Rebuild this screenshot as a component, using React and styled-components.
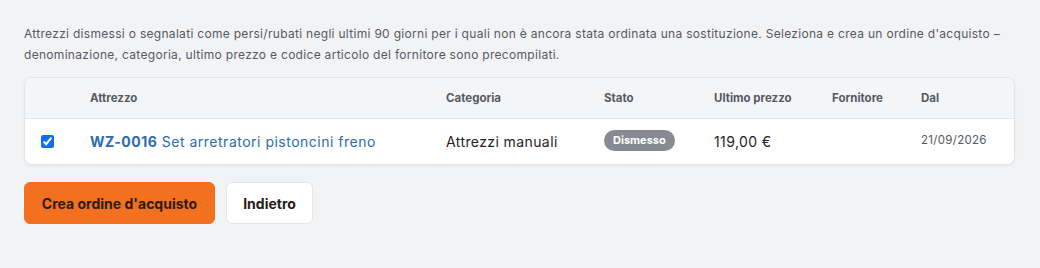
import React from "react";
import styled, { createGlobalStyle } from "styled-components";

const GlobalStyle = createGlobalStyle`
  body {
    margin: 0;
    background: #f2f3f5;
    font-family: Inter, "Noto Sans", sans-serif;
    color: #212529;
  }
`;

const rows = [
  {
    code: "WZ-0016",
    name: "Set arretratori pistoncini freno",
    category: "Attrezzi manuali",
    status: "Dismesso",
    price: "119,00 €",
    supplier: "",
    since: "21/09/2026",
  },
];

function App() {
  return (
    <>
      <GlobalStyle />
      <Page>
        <Intro>
          Attrezzi dismessi o segnalati come persi/rubati negli ultimi 90 giorni per i quali non è ancora stata
          ordinata una sostituzione. Seleziona e crea un ordine d'acquisto – denominazione, categoria, ultimo
          prezzo e codice articolo del fornitore sono precompilati.
        </Intro>
        <Card>
          <Table>
            <colgroup>
              <col style={{ width: 65 }} />
              <col style={{ width: 356 }} />
              <col style={{ width: 158 }} />
              <col style={{ width: 110 }} />
              <col style={{ width: 118 }} />
              <col style={{ width: 89 }} />
              <col />
            </colgroup>
            <thead>
              <tr>
                <Th />
                <Th>Attrezzo</Th>
                <Th>Categoria</Th>
                <Th>Stato</Th>
                <Th>Ultimo prezzo</Th>
                <Th>Fornitore</Th>
                <Th>Dal</Th>
              </tr>
            </thead>
            <tbody>
              {rows.map((r) => (
                <tr key={r.code}>
                  <Td>
                    <Check type="checkbox" defaultChecked />
                  </Td>
                  <Td>
                    <ToolLink href="#">
                      <Code>{r.code}</Code> {r.name}
                    </ToolLink>
                  </Td>
                  <Td>{r.category}</Td>
                  <Td>
                    <Badge>{r.status}</Badge>
                  </Td>
                  <Td>{r.price}</Td>
                  <Td>{r.supplier}</Td>
                  <Td $muted>{r.since}</Td>
                </tr>
              ))}
            </tbody>
          </Table>
        </Card>
        <Actions>
          <Button $primary>Crea ordine d'acquisto</Button>
          <Button>Indietro</Button>
        </Actions>
      </Page>
    </>
  );
}

const Page = styled.div`
  padding: 23px 25px 24px 24px;
`;

const Intro = styled.p`
  margin: 0 0 12px 0;
  font-size: 12px;
  letter-spacing: 0.3px;
  line-height: 21px;
  color: #555a61;
  max-width: 1000px;
`;

const Card = styled.div`
  background: #fff;
  border: 1px solid #e3e5e8;
  border-radius: 8px;
  box-shadow: 0 1px 3px rgba(0, 0, 0, 0.06);
  overflow: hidden;
`;

const Table = styled.table`
  width: 100%;
  border-collapse: collapse;
  table-layout: fixed;
`;

const Th = styled.th`
  text-align: left;
  height: 40px;
  padding: 0;
  background: #f4f5f7;
  border-bottom: 1px solid #e3e5e8;
  font-size: 11.5px;
  font-weight: 700;
  color: #555a61;
`;

const Td = styled.td`
  height: 41px;
  padding: 0;
  font-size: ${(p) => (p.$muted ? "11.5px" : "14px")};
  letter-spacing: ${(p) => (p.$muted ? "0.3px" : "0.4px")};
  color: ${(p) => (p.$muted ? "#555a61" : "#1f2226")};
  vertical-align: middle;
  padding-bottom: ${(p) => (p.$muted ? "4px" : "0")};
  &:first-child {
    padding-left: 16px;
  }
`;

const Check = styled.input`
  width: 13px;
  height: 13px;
  margin: 0 0 3px 0;
  vertical-align: middle;
  accent-color: #0d6efd;
`;

const ToolLink = styled.a`
  color: #2b6cb0;
  text-decoration: none;
  font-size: 14px;
  letter-spacing: 0.5px;
`;

const Code = styled.span`
  font-weight: 700;
`;

const Badge = styled.span`
  display: inline-block;
  background: #868b93;
  color: #fff;
  font-size: 11px;
  font-weight: 700;
  letter-spacing: 0;
  line-height: 21px;
  padding: 0 9px;
  border-radius: 11px;
  margin-bottom: 2px;
`;

const Actions = styled.div`
  display: flex;
  gap: 11px;
  margin-top: 17px;
`;

const Button = styled.button`
  height: 42px;
  padding: 0 16px;
  font-family: inherit;
  font-size: 14px;
  font-weight: 700;
  border-radius: 6px;
  cursor: pointer;
  color: #2a1c14;
  background: ${(p) => (p.$primary ? "#f3701f" : "#ffffff")};
  border: 1px solid ${(p) => (p.$primary ? "#f3701f" : "#e3e5e8")};
  min-width: ${(p) => (p.$primary ? "191px" : "87px")};
`;

export default App;
